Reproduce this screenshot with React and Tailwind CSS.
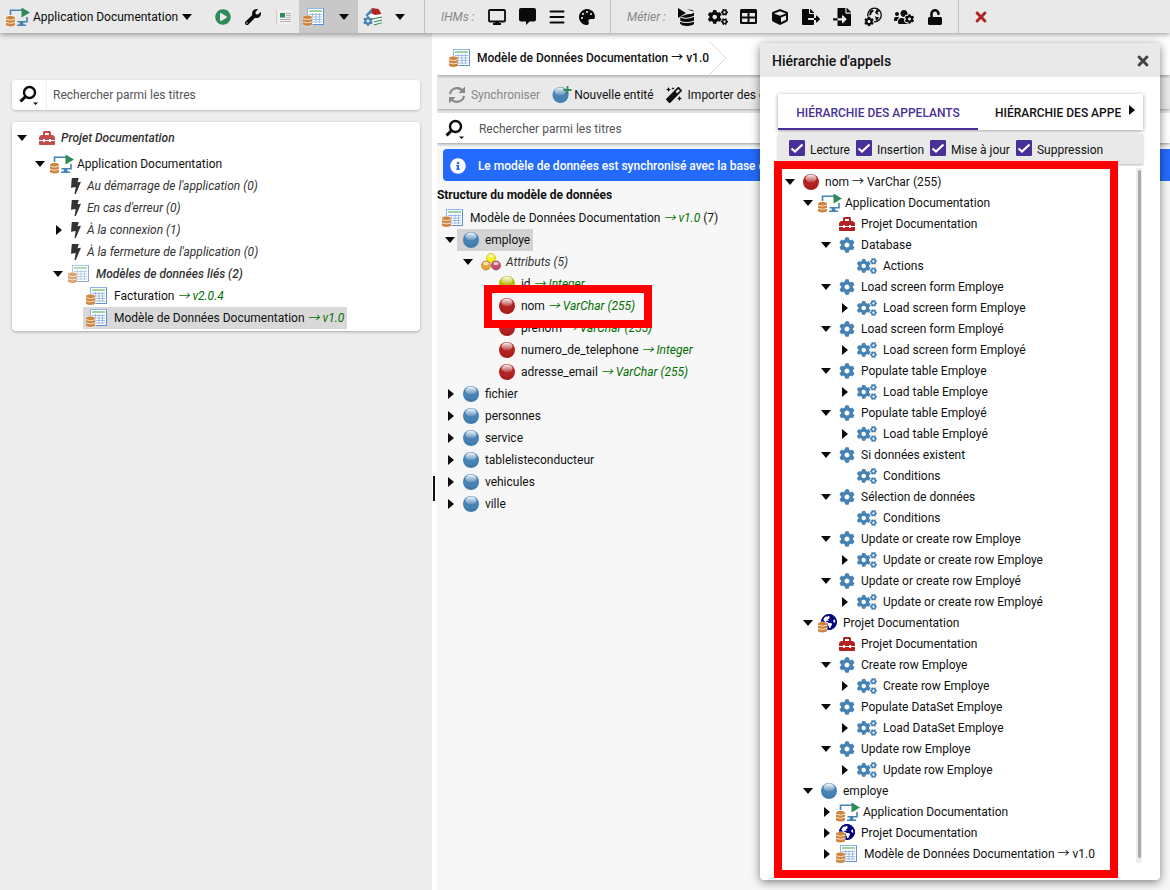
import React, { useState } from 'react';
import {
  FaCog, FaCogs, FaCube, FaFileExport, FaFileImport, FaInfoCircle, FaMagic,
  FaPalette, FaPlayCircle, FaTimes, FaToolbox, FaUnlock, FaUsersCog, FaWrench, FaGlobeAmericas,
} from 'react-icons/fa';

// ─── Icons ────────────────────────────────────────────────────────────────────

const CaretDown = () => (
  <svg className="w-[10px] h-[6px]" viewBox="0 0 10 6"><path d="M0 0h10L5 6z" fill="#0a0a0a" /></svg>
);

const CaretRight = () => (
  <svg className="w-[6px] h-[10px]" viewBox="0 0 6 10"><path d="M0 0v10l6-5z" fill="#0a0a0a" /></svg>
);

// Small orange database stack, drawn in the bottom left corner of other icons
const Stack = ({ x = 0, y = 9 }) => (
  <g transform={`translate(${x} ${y})`}>
    <path d="M-.5 1.5Q-.5-.5 4.500-.5T9.500 1.500V9q0 2-5 2t-5-2z" fill="#fff" opacity=".8" />
    <path d="M0 1.700C0 .6 2 0 4.500 0S9 .6 9 1.700v7.100c0 1-2 1.700-4.500 1.700S0 9.800 0 8.800z" fill="#cd853f" />
    <path d="M0 3.200q4.500 2 9 0M0 6.400q4.500 2 9 0" stroke="#fbe3c8" strokeWidth="1" fill="none" />
  </g>
);

const AppIcon = () => (
  <svg className="w-6 h-5 shrink-0" viewBox="0 0 24 20">
    <path d="M4.500 8V3.200H16M21 10v4.800h-9.500" stroke="#4682b4" strokeWidth="1.600" fill="none" />
    <path d="M14 15h3l.6 2.500H20V19h-9v-1.500h2.500z" fill="#4682b4" />
    <path d="M15.500.5v10L24 5.500z" fill="#2e8b57" />
    <Stack />
  </svg>
);

const ModelIcon = () => (
  <svg className="w-[22px] h-5 shrink-0" viewBox="0 0 22 20">
    <rect x="4.500" y="1.500" width="16" height="16" fill="#fff" stroke="#8fb4e6" />
    <path d="M20.500 1.500v16h-16" stroke="#5f8fd6" fill="none" />
    <path d="M6 4h13" stroke="#7cc47c" strokeWidth="1.500" />
    <path d="M6 7.500h13M6 10h13M6 12.500h13M6 15h13M9.500 6v10M13 6v10M16.500 6v10" stroke="#9dbbe6" strokeWidth="1" />
    <Stack y={8.500} />
  </svg>
);

const GlobeIcon = () => (
  <svg className="w-[19px] h-5 shrink-0" viewBox="0 0 19 20">
    <svg x="3" y="1" width="16" height="16" viewBox="0 0 16 16">
      <circle cx="8" cy="8" r="7.500" fill="#fff" stroke="#000080" />
      <FaGlobeAmericas size={16} color="#000080" />
    </svg>
    <Stack />
  </svg>
);

const BALLS = {
  blue: { base: '#4682b4', edge: '#3a6d99' },
  red: { base: '#b22222', edge: '#8f1a1a' },
  yellow: { base: '#b8b800', edge: '#9a9a00' },
};

const Ball = ({ color = 'blue' }) => (
  <svg className="size-4 shrink-0" viewBox="0 0 16 16">
    <defs>
      <linearGradient id={`shine-${color}`} x1="0" y1="0" x2="0" y2="1">
        <stop offset="0" stopColor="#fff" stopOpacity=".95" />
        <stop offset="1" stopColor="#fff" stopOpacity=".1" />
      </linearGradient>
    </defs>
    <circle cx="8" cy="8" r="8" fill={BALLS[color].base} />
    <path d="M1 11a8 8 0 0 0 14 0q-7 4-14 0z" fill={BALLS[color].edge} opacity=".4" />
    <ellipse cx="8" cy="4.500" rx="5.500" ry="4" fill={`url(#shine-${color})`} />
  </svg>
);

const AttributesIcon = () => (
  <svg className="w-5 h-[18px] shrink-0" viewBox="0 0 20 18">
    <circle cx="10" cy="5" r="4.500" fill="#f5ee1e" stroke="#c9bd00" strokeWidth=".7" />
    <circle cx="5" cy="12.500" r="4.500" fill="#e6a83c" stroke="#b97a16" strokeWidth=".7" />
    <circle cx="15" cy="12.500" r="4.500" fill="#c4506f" stroke="#97304e" strokeWidth=".7" />
    <g fill="#fff" opacity=".65">
      <ellipse cx="10" cy="3" rx="2.800" ry="1.800" />
      <ellipse cx="5" cy="10.500" rx="2.800" ry="1.800" />
      <ellipse cx="15" cy="10.500" rx="2.800" ry="1.800" />
    </g>
  </svg>
);

const BoltIcon = () => (
  <svg className="w-[10px] h-4 shrink-0" viewBox="0 0 10 16">
    <path d="M.8 0h7L6.500 4.200 10 3.800 4.800 16H3.500l1.200-7L0 9.800z" fill="#333" />
  </svg>
);

const SearchIcon = () => (
  <svg className="w-5 h-5" viewBox="0 0 20 20">
    <circle cx="10.500" cy="7.500" r="5.500" stroke="#0a0a0a" strokeWidth="2.400" fill="none" />
    <path d="M6.500 11.500 1.500 16.500" stroke="#0a0a0a" strokeWidth="3" />
    <path d="M14 17.500h5l-2.500 2.500z" fill="#0a0a0a" />
  </svg>
);

const CardIcon = () => (
  <svg className="size-4" viewBox="0 0 16 16">
    <path d="M.5 1v14" stroke="#ccc" />
    <path d="M2 1h14v14H2z" fill="#f0f0f0" />
    <path d="M4 4h5v4.500H4z" fill="#2e8b57" />
    <path d="M10 4.500h5M10 6.500h5M10 8.500h5M4 10.500h11M4 12.500h11" stroke="#b5b5b5" />
  </svg>
);

// Three stacked books with a cog in front
const LibraryIcon = () => (
  <svg className="w-5 h-[18px]" viewBox="0 0 20 18">
    <path d="M9 0 15.500 1l3 5-6.500 1-4-2z" fill="#b22222" />
    <path d="M9 0 2.500 7 4 8.500 8.500 5z" fill="#4682b4" />
    <path d="M4.500 8.500 8.500 5.500 12 7.500l6.500-1v2L12 10.500z" fill="#fff" />
    <path d="M9 11 19 9M11 14l8-2M11 17l8-2.500" stroke="#2e8b57" strokeWidth="1.200" />
    <path d="M10 12.500l9-2M11 15.500l8-2" stroke="#fff" />
    <FaCog x="0" y="8" size={10} color="#4682b4" />
  </svg>
);

const ScreenIcon = () => (
  <svg className="w-5 h-4" viewBox="0 0 20 16">
    <rect x="2" y="1" width="16" height="11.500" rx="1" stroke="#0a0a0a" strokeWidth="1.800" fill="none" />
    <path d="M8 12h4v2h2v2H6v-2h2z" fill="#0a0a0a" />
  </svg>
);

const ChatIcon = () => (
  <svg className="w-[17px] h-[17px]" viewBox="0 0 17 17">
    <path d="M2 0h13a2 2 0 0 1 2 2v9.500a2 2 0 0 1-2 2h-4.500L7 17v-3.500H2a2 2 0 0 1-2-2V2a2 2 0 0 1 2-2z" fill="#0a0a0a" />
  </svg>
);

const MenuIcon = () => (
  <svg className="w-4 h-4" viewBox="0 0 16 16">
    <path d="M1.500 2.500h13M1.500 8h13M1.500 13.500h13" stroke="#0a0a0a" strokeWidth="2" strokeLinecap="round" />
  </svg>
);

const DbPlayIcon = () => (
  <svg className="w-[17px] h-[18px]" viewBox="0 0 17 18">
    <path d="M0 0v10l8-5z" fill="#0a0a0a" />
    <path d="M9 1.500c4.500 0 7 .8 7 2.200S13.500 6 9.500 6.200L7 7c-3 1-4 1.500-4.500 2L2 15.500C3 17.200 6 18 9 18s7-1 7-2.500V3.500z" fill="#0a0a0a" />
    <path d="M3 9.200q6 2.500 13-1M2 13.200q7 2.800 14-.3M9 5.500q4 0 7-1.500" stroke="#e9e9e9" strokeWidth="1.100" fill="none" />
  </svg>
);

const TableIcon = () => (
  <svg className="w-[17px] h-[15px]" viewBox="0 0 17 15">
    <rect width="17" height="15" rx="1.500" fill="#0a0a0a" />
    <path d="M2 4h5.500v3.500H2zM9.500 4H15v3.500H9.500zM2 9.500h5.500V13H2zM9.500 9.500H15V13H9.500z" fill="#e9e9e9" />
  </svg>
);

const GlobeCogIcon = () => (
  <svg className="w-[18px] h-5" viewBox="0 0 18 20">
    <circle cx="10.500" cy="8" r="6.800" stroke="#0a0a0a" strokeWidth="1.300" fill="none" />
    <path d="M6 4 8.500 2.500 10 4 8 5.500 7 8 5 8.500zM13 2l2.500 2-2 1.500L15 8l-2.500-1L11 5.500zM10.500 9l2 1 2.500 0-1.500 3-1.500.5-.5-2.500z" fill="#0a0a0a" />
    <circle cx="5" cy="14.500" r="5" fill="#e9e9e9" />
    <FaCog x="0" y="9.500" size={10} color="#0a0a0a" />
  </svg>
);

const SyncIcon = () => (
  <svg className="size-[18px]" viewBox="0 0 18 18">
    <path d="M2 8c.5-3.500 3.500-5.800 7-5.800 2.500 0 4.500 1 6 3M16 10c-.5 3.500-3.500 5.800-7 5.800-2.500 0-4.500-1-6-3" stroke="#888" strokeWidth="2.200" fill="none" />
    <path d="M17 .5V7h-6.500zM1 17.500V11h6.500z" fill="#888" />
  </svg>
);

const NewEntityIcon = () => (
  <svg className="w-5 h-[18px]" viewBox="0 0 20 18">
    <defs>
      <linearGradient id="shine-new" x1="0" y1="0" x2="0" y2="1">
        <stop offset="0" stopColor="#fff" stopOpacity=".9" />
        <stop offset="1" stopColor="#fff" stopOpacity=".1" />
      </linearGradient>
    </defs>
    <circle cx="8.500" cy="9" r="8" fill="#4682b4" />
    <ellipse cx="8" cy="5.500" rx="5.500" ry="4" fill="url(#shine-new)" />
    <path d="M15.500 0v8M11.500 4h8" stroke="#2e8b57" strokeWidth="1.800" />
  </svg>
);

// ─── Tree ─────────────────────────────────────────────────────────────────────

const Cog = () => <FaCog className="size-4 text-[#4682b4]" />;
const Cogs = () => <FaCogs className="size-5 text-[#4682b4]" />;
const Toolbox = () => <FaToolbox className="size-4 text-[#b22222]" />;

// [icon, slot classes] — the slot width decides where the label starts
const KINDS = {
  blue: [<Ball />, 'w-7 justify-center'],
  red: [<Ball color="red" />, 'w-7 justify-center'],
  yellow: [<Ball color="yellow" />, 'w-7 justify-center'],
  app: [<AppIcon />, 'w-[30px] justify-center'],
  model: [<ModelIcon />, 'w-[31px] pl-[3px]'],
  models: [<ModelIcon />, 'w-[31px] pl-[3px] opacity-75'],
  globe: [<GlobeIcon />, 'w-7 pl-[3px]'],
  cog: [<Cog />, 'w-7 justify-center'],
  cogs: [<Cogs />, 'w-8 justify-center'],
  box: [<Toolbox />, 'w-7 justify-center'],
  project: [<Toolbox />, 'w-8 pl-[10px] opacity-80'],
  attributes: [<AttributesIcon />, 'w-[31px] pl-[6px]'],
  bolt: [<BoltIcon />, 'w-[22px] justify-center'],
};

const INDENTS = ['pl-0', 'pl-[18px]', 'pl-[36px]', 'pl-[54px]'];

const TreeRow = ({ level, caret, kind, label, type, tone = '', height = 'h-[22px]', selected = '' }) => {
  const [icon, slot] = KINDS[kind];
  return (
    <li className={`flex items-center whitespace-nowrap ${height} ${INDENTS[level]}`}>
      <span className="flex w-[14px] shrink-0 justify-center">
        {caret === 'open' && <button aria-label="Replier"><CaretDown /></button>}
        {caret === 'closed' && <button aria-label="Déplier" className="pl-[2px]"><CaretRight /></button>}
      </span>
      <span className={`flex h-full items-center ${selected}`}>
        <span className={`flex shrink-0 items-center ${slot}`}>{icon}</span>
        <span className={tone}>
          {label}
          {type && <i className="text-[#006e00]"> → {type}</i>}
        </span>
      </span>
    </li>
  );
};

const PROJECT_ROWS = [
  { level: 0, caret: 'open', kind: 'project', label: 'Projet Documentation', tone: 'italic font-medium text-[#333]', height: 'h-6 mb-[3px]' },
  { level: 1, caret: 'open', kind: 'app', label: 'Application Documentation' },
  { level: 2, kind: 'bolt', label: "Au démarrage de l'application (0)", tone: 'italic text-[#333]' },
  { level: 2, kind: 'bolt', label: "En cas d'erreur (0)", tone: 'italic text-[#333]' },
  { level: 2, caret: 'closed', kind: 'bolt', label: 'À la connexion (1)', tone: 'italic text-[#333]' },
  { level: 2, kind: 'bolt', label: "À la fermeture de l'application (0)", tone: 'italic text-[#333]' },
  { level: 2, caret: 'open', kind: 'models', label: 'Modèles de données liés (2)', tone: 'italic font-medium text-[#333]' },
  { level: 3, kind: 'model', label: 'Facturation', type: 'v2.0.4' },
  { level: 3, kind: 'model', label: 'Modèle de Données Documentation', type: 'v1.0', selected: 'bg-[#d9d9d9] pr-[3px]' },
];

const MODEL_ROWS = [
  { level: 0, caret: 'open', kind: 'blue', label: 'employe', selected: 'bg-[#d3d3d3] pr-[3px]' },
  { level: 1, caret: 'open', kind: 'attributes', label: 'Attributs (5)', tone: 'italic text-[#333]' },
  { level: 2, kind: 'yellow', label: 'id', type: 'Integer' },
  { level: 2, kind: 'red', label: 'nom', type: 'VarChar (255)' },
  { level: 2, kind: 'red', label: 'prenom', type: 'VarChar (255)' },
  { level: 2, kind: 'red', label: 'numero_de_telephone', type: 'Integer' },
  { level: 2, kind: 'red', label: 'adresse_email', type: 'VarChar (255)' },
  ...['fichier', 'personnes', 'service', 'tablelisteconducteur', 'vehicules', 'ville'].map((label) => (
    { level: 0, caret: 'closed', kind: 'blue', label }
  )),
];

const step = (label, child, caret = 'closed') => [
  { level: 2, caret: 'open', kind: 'cog', label },
  { level: 3, caret, kind: 'cogs', label: child },
];

const CALL_ROWS = [
  { level: 0, caret: 'open', kind: 'red', label: 'nom → VarChar (255)' },
  { level: 1, caret: 'open', kind: 'app', label: 'Application Documentation' },
  { level: 2, kind: 'box', label: 'Projet Documentation' },
  ...step('Database', 'Actions', null),
  ...step('Load screen form Employe', 'Load screen form Employe'),
  ...step('Load screen form Employé', 'Load screen form Employé'),
  ...step('Populate table Employe', 'Load table Employe'),
  ...step('Populate table Employé', 'Load table Employé'),
  ...step('Si données existent', 'Conditions', null),
  ...step('Sélection de données', 'Conditions', null),
  ...step('Update or create row Employe', 'Update or create row Employe'),
  ...step('Update or create row Employé', 'Update or create row Employé'),
  { level: 1, caret: 'open', kind: 'globe', label: 'Projet Documentation' },
  { level: 2, kind: 'box', label: 'Projet Documentation' },
  ...step('Create row Employe', 'Create row Employe'),
  ...step('Populate DataSet Employe', 'Load DataSet Employe'),
  ...step('Update row Employe', 'Update row Employe'),
  { level: 1, caret: 'open', kind: 'blue', label: 'employe' },
  { level: 2, caret: 'closed', kind: 'app', label: 'Application Documentation' },
  { level: 2, caret: 'closed', kind: 'globe', label: 'Projet Documentation' },
  { level: 2, caret: 'closed', kind: 'model', label: 'Modèle de Données Documentation → v1.0' },
];

// ─── Top bar ──────────────────────────────────────────────────────────────────

const SCREEN_TOOLS = [
  ['Écrans', <ScreenIcon />],
  ['Messages', <ChatIcon />],
  ['Menus', <MenuIcon />],
  ['Thèmes', <FaPalette className="size-4" />],
];

const BUSINESS_TOOLS = [
  ['Requêtes', <DbPlayIcon />],
  ['Processus', <FaCogs className="size-5" />],
  ['Tables', <TableIcon />],
  ['Objets', <FaCube className="size-4" />],
  ['Exports', <FaFileExport className="size-[18px]" />],
  ['Imports', <FaFileImport className="size-[18px]" />],
  ['Services web', <GlobeCogIcon />],
  ['Groupes', <FaUsersCog className="size-5" />],
  ['Droits', <FaUnlock className="size-4" />],
];

const ToolButton = ({ label, width = 'w-[30px]', children }) => (
  <button aria-label={label} title={label} className={`flex h-full shrink-0 items-center justify-center ${width}`}>
    {children}
  </button>
);

const TopBar = () => (
  <header className="relative z-10 flex h-[33px] items-center bg-[#e9e9e9] text-[#0a0a0a] shadow-[0_2px_5px_rgba(0,0,0,0.35)]">
    <button className="flex h-full w-[197px] shrink-0 items-center pl-[6px]">
      <AppIcon />
      <span className="ml-[3px] mr-1">Application Documentation</span>
      <CaretDown />
    </button>
    <div className="flex h-full w-[228px] shrink-0 items-center border-r border-[#c0c0c0] pl-[11px]">
      <ToolButton label="Lancer"><FaPlayCircle className="size-4 text-[#2e8b57]" /></ToolButton>
      <ToolButton label="Configurer"><FaWrench className="size-4" /></ToolButton>
      <ToolButton label="Fiche" width="w-[31px]"><CardIcon /></ToolButton>
      <div className="flex h-full bg-[#c8c8c8]">
        <ToolButton label="Modèles de données"><ModelIcon /></ToolButton>
        <ToolButton label="Autres modèles" width="w-[29px]"><CaretDown /></ToolButton>
      </div>
      <ToolButton label="Bibliothèques"><LibraryIcon /></ToolButton>
      <ToolButton label="Autres bibliothèques" width="w-[24px]"><CaretDown /></ToolButton>
    </div>
    <div className="flex h-full w-[186px] shrink-0 items-center border-r border-[#c0c0c0] pl-4">
      <i className="w-[41px] text-[#888]">IHMs :</i>
      {SCREEN_TOOLS.map(([label, icon]) => <ToolButton key={label} label={label}>{icon}</ToolButton>)}
    </div>
    <div className="flex h-full w-[348px] shrink-0 items-center border-r border-[#c0c0c0] pl-4">
      <i className="w-[44px] text-[#888]">Métier :</i>
      {BUSINESS_TOOLS.map(([label, icon]) => <ToolButton key={label} label={label} width="w-[31px]">{icon}</ToolButton>)}
    </div>
    <ToolButton label="Fermer" width="w-[43px]"><FaTimes className="size-4 text-[#b22222]" /></ToolButton>
  </header>
);

// ─── Panels ───────────────────────────────────────────────────────────────────

const ProjectPanel = () => (
  <aside className="w-[calc(37%-1px)] shrink-0 bg-[#ededed] pt-[47px] px-3">
    <div className="flex h-[30px] items-center rounded bg-white shadow-[0_1px_3px_rgba(0,0,0,0.2)]">
      <button aria-label="Options de recherche" className="flex h-full w-[35px] items-center justify-center border-r border-[#eee]">
        <SearchIcon />
      </button>
      <input aria-label="Rechercher" placeholder="Rechercher parmi les titres" className="h-full min-w-0 flex-1 px-[6px] outline-none placeholder:text-[#555]" />
    </div>
    <ul className="mt-3 rounded bg-white pt-1 pb-[2px] pl-[3px] shadow-[0_1px_3px_rgba(0,0,0,0.3)]">
      {PROJECT_ROWS.map((row, i) => <TreeRow key={i} {...row} />)}
    </ul>
  </aside>
);

const ModelPanel = () => (
  <main className="min-w-0 flex-1 overflow-hidden bg-[#f7f7f7]">
    <nav className="flex h-[42px] items-center bg-white pt-2 pl-3 shadow-[0_1px_3px_rgba(0,0,0,0.4)]">
      <ModelIcon />
      <a href="#model" className="ml-[6px] font-medium">Modèle de Données Documentation → v1.0</a>
      <svg className="h-[34px] w-[18px]" viewBox="0 0 18 34"><path d="M0 0l17 17L0 34" stroke="#ddd" fill="none" /></svg>
    </nav>
    <div className="mt-[3px] flex h-[31px] items-center whitespace-nowrap bg-[#e9e9e9] pt-[2px] pl-[11px] shadow-[0_1px_3px_rgba(0,0,0,0.4)]">
      <button disabled className="flex items-center gap-[5px] text-[#888]"><SyncIcon />Synchroniser</button>
      <button className="ml-3 flex items-center gap-[2px]"><NewEntityIcon />Nouvelle entité</button>
      <button className="ml-3 flex items-center gap-[6px]"><FaMagic className="size-4" />Importer des entités</button>
    </div>
    <div className="mt-1 flex h-[30px] items-center bg-white pt-px pl-2 shadow-[0_1px_3px_rgba(0,0,0,0.4)]">
      <button aria-label="Options de recherche"><SearchIcon /></button>
      <input aria-label="Rechercher" placeholder="Rechercher parmi les titres" className="ml-[14px] h-full min-w-0 flex-1 outline-none placeholder:text-[#555]" />
    </div>
    <p className="mt-[6px] ml-[6px] flex h-8 items-center gap-3 whitespace-nowrap rounded-l bg-[#246bfd] pt-px pl-[7px] font-medium text-white">
      <FaInfoCircle className="size-4" />
      Le modèle de données est synchronisé avec la base de données
    </p>
    <h2 className="mt-[5px] h-[18px] font-bold leading-[18px]">Structure du modèle de données</h2>
    <div className="mt-[3px] flex h-[22px] items-center pl-[5px]">
      <ModelIcon />
      <span className="ml-[6px]">Modèle de Données Documentation <i className="text-[#006e00]">→ v1.0</i> (7)</span>
    </div>
    <ul className="relative pl-[6px]">
      {MODEL_ROWS.map((row, i) => <TreeRow key={i} {...row} />)}
      <li aria-hidden="true" className="absolute top-14 left-[47px] h-[43px] w-[168px] border-8 border-[#f00]" />
    </ul>
  </main>
);

// ─── Call hierarchy dialog ────────────────────────────────────────────────────

const Check = ({ label }) => {
  const [checked, setChecked] = useState(true);
  return (
    <label className="flex items-center gap-[5px]">
      <span className="mb-[2px] grid size-4">
        <input
          type="checkbox"
          checked={checked}
          onChange={() => setChecked(!checked)}
          className="col-start-1 row-start-1 size-4 appearance-none rounded-[1px] border border-[#483096] checked:bg-[#483096]"
        />
        {checked && (
          <svg className="pointer-events-none col-start-1 row-start-1 size-4" viewBox="0 0 16 16">
            <path d="M2.500 8.500 6 11.500l7.500-7" stroke="#fff" strokeWidth="2.200" fill="none" />
          </svg>
        )}
      </span>
      <span className="pt-px">{label}</span>
    </label>
  );
};

const CallHierarchyDialog = () => (
  <section role="dialog" aria-label="Hiérarchie d'appels" className="absolute top-[43px] right-[10px] z-20 w-[400px] rounded bg-white pb-4 shadow-[0_2px_10px_rgba(0,0,0,0.5)]">
    <header className="flex h-[34px] items-center justify-between rounded-t bg-[#e9e9e9] pt-[2px] pl-3 pr-[9px]">
      <h1 className="text-[14px] font-medium">Hiérarchie d'appels</h1>
      <button aria-label="Fermer"><FaTimes className="size-4 text-[#444]" /></button>
    </header>
    <div className="mr-[17px] ml-[18px] mt-[17px]">
      <div className="flex h-9 items-stretch whitespace-nowrap font-medium shadow-[0_1px_4px_rgba(0,0,0,0.4)]" role="tablist">
        <button role="tab" aria-selected="true" className="w-[200px] border-b-2 border-[#483096] pt-1 text-[#483096]">HIÉRARCHIE DES APPELANTS</button>
        <button role="tab" aria-selected="false" className="ml-[17px] w-[126px] overflow-hidden pt-[2px] text-left">HIÉRARCHIE DES APPE</button>
        <button aria-label="Onglets suivants" className="ml-2 pb-1"><CaretRight /></button>
      </div>
      <div className="mt-1 flex h-[30px] items-center gap-[6px] bg-[#e9e9e9] pl-[11px] shadow-[0_1px_2px_rgba(0,0,0,0.3)]">
        <Check label="Lecture" />
        <Check label="Insertion" />
        <Check label="Mise à jour" />
        <Check label="Suppression" />
      </div>
    </div>
    <div className="relative pt-[7px] pl-[23px]">
      <ul>
        {CALL_ROWS.map((row, i) => <TreeRow key={i} {...row} height="h-[21px]" />)}
      </ul>
      <div className="absolute top-1 right-[18px] h-[695px] w-[6px] bg-[#eee]">
        <div className="mx-auto mt-[2px] h-[688px] w-[3px] rounded bg-[#a9a9a9]" />
      </div>
      <div aria-hidden="true" className="absolute -top-[3px] left-[14px] h-[717px] w-[344px] border-8 border-[#f00]" />
    </div>
  </section>
);

const App = () => (
  <div className="relative flex min-h-screen flex-col overflow-hidden bg-[#f7f7f7] font-[Roboto,'Noto_Sans_CJK_SC',sans-serif] text-[12px] leading-[16px] text-[#111]">
    <TopBar />
    <div className="flex flex-1">
      <ProjectPanel />
      <div className="flex w-[5px] shrink-0 items-center bg-white pt-[54px] pl-px">
        <div className="h-[25px] w-[2px] bg-[#111]" />
      </div>
      <ModelPanel />
    </div>
    <CallHierarchyDialog />
  </div>
);

export default App;
